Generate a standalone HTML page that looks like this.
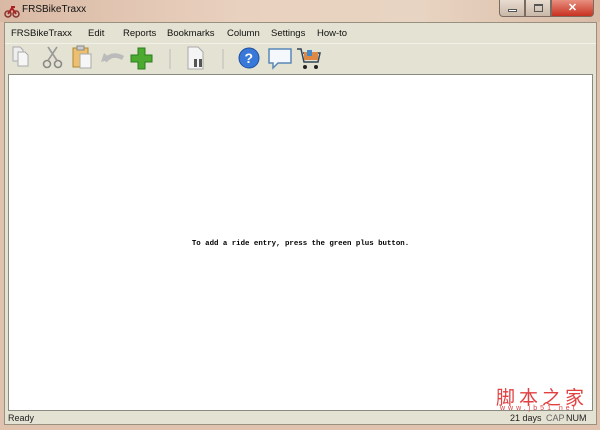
<!DOCTYPE html>
<html><head><style>
*{margin:0;padding:0;box-sizing:border-box}
body{width:600px;height:430px;overflow:hidden;background:#dfc3ae;font-family:"Liberation Sans",sans-serif;position:relative}
.title{position:absolute;left:0;top:0;width:600px;height:22px;background:linear-gradient(90deg,#d9b9a4,#e9d1bf 40%,#e8d4c2 70%,#d8bba6)}
.title span{position:absolute;left:22px;top:4px;font-size:10px;color:#111}
.btns{position:absolute;right:6px;top:0;height:17px;display:flex}
.btns div{height:17px;border:1px solid #7a6a60;border-top:none}
.frame{position:absolute;left:4px;top:22px;width:593px;height:403px;background:#e4e2d2;border:1px solid #9a9080}
.menu{position:absolute;left:0;top:0;height:20px;font-size:9.5px;color:#111}
.menu span{position:absolute;top:5px;white-space:nowrap}
.tb{position:absolute;left:0;top:20px;width:591px;height:30px;border-top:1px solid #f4f2e8}
.content{position:absolute;left:3px;top:51px;width:585px;height:337px;background:#fff;border:1px solid #8a8a80}
.msg{position:absolute;left:0;width:100%;top:165px;text-align:center;font-family:"Liberation Mono",monospace;font-size:7.4px;color:#000;font-weight:bold}
.status{position:absolute;left:0;top:389px;width:591px;height:13px;font-size:9px;color:#222}
.wm{position:absolute;left:496px;top:383px;font-family:"Liberation Sans","Noto Sans CJK SC",sans-serif;color:#e04040;font-size:19px;letter-spacing:4px}
.wm2{position:absolute;left:500px;top:405px;font-size:7px;color:#e04040;letter-spacing:3px}
</style></head><body>
<div class="title">
<svg style="position:absolute;left:4px;top:4px" width="16" height="14"><circle cx="4" cy="10" r="3" fill="none" stroke="#833" stroke-width="1.5"/><circle cx="12" cy="10" r="3" fill="none" stroke="#833" stroke-width="1.5"/><path d="M4 10L8 4L12 10M7 3h4" stroke="#a22" stroke-width="2" fill="none"/></svg>
<span>FRSBikeTraxx</span>
<div class="btns">
<div style="width:26px;background:linear-gradient(#e8dcd0,#c8b8a8);border-radius:0 0 0 4px;position:relative"><div style="position:absolute;left:8px;top:9px;width:9px;height:3px;border:1px solid #555;background:#fff"></div></div>
<div style="width:26px;background:linear-gradient(#e8dcd0,#c8b8a8);position:relative"><div style="position:absolute;left:8px;top:4px;width:9px;height:8px;border:1px solid #555;border-top-width:2px"></div></div>
<div style="width:43px;background:linear-gradient(#e89080,#c83020);border-radius:0 0 4px 0;color:#fff;font-weight:bold;font-size:11px;text-align:center;line-height:16px">✕</div>
</div>
</div>
<div class="frame">
<div class="menu"><span style="left:6px">FRSBikeTraxx</span><span style="left:83px">Edit</span><span style="left:118px">Reports</span><span style="left:162px">Bookmarks</span><span style="left:222px">Column</span><span style="left:266px">Settings</span><span style="left:312px">How-to</span></div>
<div class="tb">
<svg width="340" height="30">
<path d="M8 3h7l3 3v11h-10z" fill="#eee" stroke="#aaa"/><path d="M13 8h7l3 3v11h-10z" fill="#f6f6f6" stroke="#aaa"/>
<circle cx="42" cy="20" r="3.5" fill="none" stroke="#888" stroke-width="1.6"/><circle cx="53" cy="20" r="3.5" fill="none" stroke="#888" stroke-width="1.6"/><path d="M43 16.5L52 3M52 16.5L43 3" stroke="#999" stroke-width="1.6"/>
<rect x="68" y="4" width="15" height="19" fill="#ecc070" stroke="#b08830"/><rect x="72" y="2" width="7" height="4" fill="#ccc" stroke="#888"/><rect x="75" y="10" width="11" height="14" fill="#f6f6f6" stroke="#aaa"/>
<path d="M100 17Q107 8 118 14" stroke="#bbb" stroke-width="4.5" fill="none"/><path d="M96 18l3-9 7 6z" fill="#bbb"/>
<path d="M133 4h7v7h7v7h-7v7h-7v-7h-7v-7h7z" fill="#4caa30" stroke="#2e7d1c"/>
<line x1="165" y1="5" x2="165" y2="25" stroke="#bbb"/>
<path d="M183 3h10l5 5v17h-15z" fill="#f4f4f4" stroke="#aaa"/><rect x="189" y="15" width="3" height="8" fill="#555"/><rect x="194" y="15" width="3" height="8" fill="#555"/>
<line x1="218" y1="5" x2="218" y2="25" stroke="#bbb"/>
<circle cx="244" cy="14" r="10" fill="#3878d8" stroke="#2050a0"/><text x="239.5" y="19" font-size="14" font-weight="bold" fill="#fff" font-family="Liberation Sans">?</text>
<path d="M264 5h22v14h-13l-5 5v-5h-4z" fill="#f4f8fc" stroke="#5a88b8" stroke-width="1.5"/>
<path d="M292 5h4l3 13h14l2-9h-17" fill="none" stroke="#345" stroke-width="1.5"/><rect x="299" y="8" width="14" height="8" fill="#d84"/><rect x="302" y="6" width="5" height="6" fill="#48c"/><circle cx="300" cy="23" r="2" fill="#222"/><circle cx="311" cy="23" r="2" fill="#222"/>
</svg>
</div>
<div class="content"><div class="msg">To add a ride entry, press the green plus button.</div></div>
<div class="status"><span style="position:absolute;left:3px;top:1px">Ready</span><span style="position:absolute;left:505px;top:1px">21 days</span><span style="position:absolute;left:541px;top:1px;color:#666">CAP</span><span style="position:absolute;left:561px;top:1px">NUM</span></div>
</div>
<div class="wm">脚本之家</div>
<div class="wm2">www.jb51.net</div>
</body></html>
